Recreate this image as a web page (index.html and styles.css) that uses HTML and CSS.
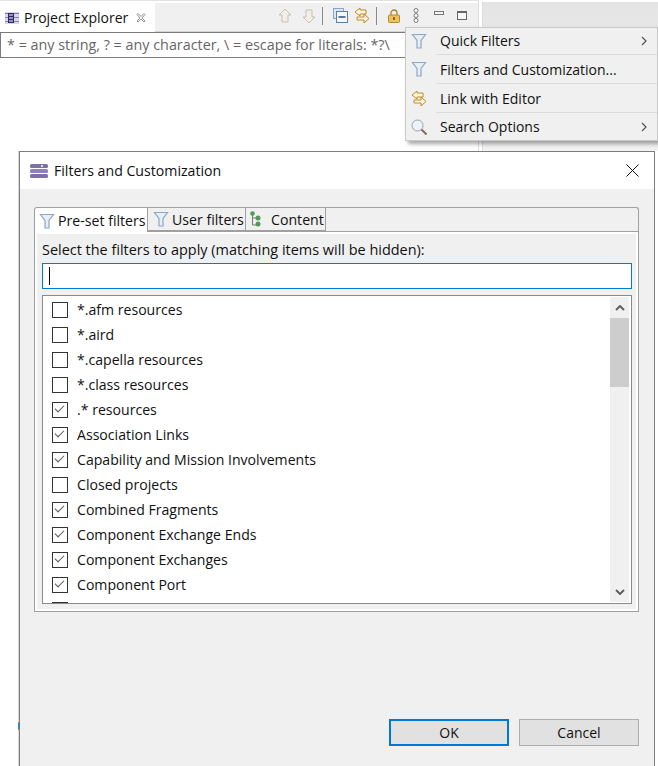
FILE: index.html
```html
<!DOCTYPE html>
<html lang="en">
<head>
    <meta charset="UTF-8">
    <meta name="viewport" content="width=device-width, initial-scale=1.0">
    <title>Filters and Customization</title>
    <link rel="stylesheet" href="styles.css">
</head>
<body>
    <svg class="defs" width="0" height="0">
        <symbol id="funnel" viewBox="0 0 16 16">
            <path d="M1.500 1.500h13l-4.500 6v7.500h-4V7.500z" fill="#e6eef6" stroke="#8fa6c4" stroke-width="1.200"/>
        </symbol>
        <symbol id="link" viewBox="0 0 16 17">
            <path d="M6 1 1 5l5 4V7h6V3H6z" fill="#fff6dc" stroke="#c08a2a"/>
            <path d="M10 7l5 4.500-5 4.500v-3H3v-3h7z" fill="#fff6dc" stroke="#c08a2a"/>
        </symbol>
    </svg>

    <div class="view">
        <div class="view-tabs">
            <div class="view-tab">
                <svg class="ico" width="14" height="14" viewBox="0 0 14 14">
                    <rect x="0" y="1" width="14" height="12" fill="#d8d4ea"/>
                    <path d="M0 2.500h14M0 6.500h14M0 10.500h14" stroke="#8a80b8"/>
                    <rect x="3" y="2" width="6" height="10" fill="#2c2a66"/>
                    <path d="M4 4h4M4 7h4M4 10h4" stroke="#fff"/>
                </svg>
                <span class="view-title">Project Explorer</span>
                <svg class="tab-close" width="10" height="10" viewBox="0 0 10 10">
                    <path d="M1 1.500 2 .500l3 3 3-3 1 1-3 3.500 3 3-1 1-3-3-3 3-1-1 3-3z" fill="#fff" stroke="#777" stroke-width=".8"/>
                </svg>
            </div>
            <div class="view-tools">
                <svg class="tool-up" width="14" height="16" viewBox="0 0 14 16"><path d="M7 1 1 7h3v7h6V7h3z" fill="#f2f0e6" stroke="#c3c1b4"/></svg>
                <svg class="tool-down" width="14" height="16" viewBox="0 0 14 16"><path d="M7 15 1 9h3V2h6v7h3z" fill="#f2f0e6" stroke="#c3c1b4"/></svg>
                <span class="tool-sep sep-first"></span>
                <svg class="tool-collapse" width="15" height="15" viewBox="0 0 15 15">
                    <rect x=".5" y=".5" width="10" height="10" fill="#d9e6f3" stroke="#8aa5c4"/>
                    <rect x="3.500" y="3.500" width="11" height="11" fill="#f4f8fc" stroke="#5b7fa8"/>
                    <path d="M5.500 9h7" stroke="#1f4f86" stroke-width="1.500"/>
                </svg>
                <svg class="tool-link" width="16" height="17"><use href="#link"/></svg>
                <span class="tool-sep sep-second"></span>
                <svg class="tool-lock" width="12" height="14" viewBox="0 0 12 14">
                    <path d="M3 6V4a3 3 0 0 1 6 0v2" fill="none" stroke="#a9842f" stroke-width="1.300"/>
                    <rect x=".5" y="6" width="11" height="7.500" rx="1" fill="#eec25a" stroke="#b08a32"/>
                    <rect x="5" y="8" width="2" height="3" fill="#8a6a20"/>
                </svg>
                <svg class="tool-dots" width="6" height="15" viewBox="0 0 6 15">
                    <circle cx="3" cy="2.500" r="2" fill="#fff" stroke="#777"/>
                    <circle cx="3" cy="7.500" r="2" fill="#fff" stroke="#777"/>
                    <circle cx="3" cy="12.500" r="2" fill="#fff" stroke="#777"/>
                </svg>
                <span class="tool-min"></span>
                <span class="tool-max"></span>
            </div>
        </div>
        <div class="view-filter">* = any string, ? = any character, \ = escape for literals: *?\</div>
    </div>

    <div class="side-panel"></div>

    <div class="menu">
        <div class="menu-item">
            <svg class="menu-ico" width="16" height="16"><use href="#funnel"/></svg>
            <span class="menu-label">Quick Filters</span>
            <svg class="menu-arrow" width="6" height="10" viewBox="0 0 6 10"><path d="M1 1l4 4-4 4" fill="none" stroke="#555" stroke-width="1.200"/></svg>
        </div>
        <div class="menu-item">
            <svg class="menu-ico" width="16" height="16"><use href="#funnel"/></svg>
            <span class="menu-label">Filters and Customization...</span>
        </div>
        <div class="menu-item">
            <svg class="menu-ico" width="16" height="17"><use href="#link"/></svg>
            <span class="menu-label">Link with Editor</span>
        </div>
        <div class="menu-item">
            <svg class="menu-ico" width="16" height="16" viewBox="0 0 16 16">
                <circle cx="6.500" cy="6.500" r="5.500" fill="#eef1f6" stroke="#9aa0aa"/>
                <path d="M10.500 10.500 15.500 15.500" stroke="#8a6a55" stroke-width="2"/>
            </svg>
            <span class="menu-label">Search Options</span>
            <svg class="menu-arrow" width="6" height="10" viewBox="0 0 6 10"><path d="M1 1l4 4-4 4" fill="none" stroke="#555" stroke-width="1.200"/></svg>
        </div>
    </div>

    <div class="dialog">
        <span class="edge-mark"></span>
        <div class="dialog-title">
            <svg width="18" height="14" viewBox="0 0 18 14">
                <rect x="0" y="0" width="18" height="4" rx="1.500" fill="#7d6fa8"/>
                <rect x="0" y="5" width="18" height="4" rx="1.500" fill="#8f82b6"/>
                <rect x="0" y="10" width="18" height="4" rx="1.500" fill="#7d6fa8"/>
                <circle cx="12" cy="2" r="1" fill="#fff"/>
            </svg>
            <span class="dialog-name">Filters and Customization</span>
            <svg class="dialog-close" width="13" height="13" viewBox="0 0 13 13"><path d="M.5.500l12 12M12.500.500l-12 12" stroke="#111" fill="none"/></svg>
        </div>
        <div class="dialog-body">
            <div class="tabs">
                <div class="tab-bar">
                    <div class="tab tab-active">
                        <svg width="16" height="16"><use href="#funnel"/></svg>
                        <span>Pre-set filters</span>
                    </div>
                    <div class="tab tab-user">
                        <svg width="16" height="16"><use href="#funnel"/></svg>
                        <span>User filters</span>
                    </div>
                    <div class="tab tab-content">
                        <svg width="12" height="16" viewBox="0 0 12 16">
                            <path d="M2.500 3v11h5M2.500 7h5" stroke="#777" fill="none"/>
                            <circle cx="2.500" cy="2.500" r="2.300" fill="#4f9a55"/>
                            <circle cx="8" cy="7" r="2.500" fill="#4f9a55"/>
                            <circle cx="8" cy="13" r="2.500" fill="#4f9a55"/>
                        </svg>
                        <span>Content</span>
                    </div>
                </div>
                <div class="tab-panel">
                    <div class="panel-label">Select the filters to apply (matching items will be hidden):</div>
                    <div class="search-box"><span class="caret"></span></div>
                    <div class="filter-list">
                        <ul class="rows">
                            <li class="row"><span class="check"></span>*.afm resources</li>
                            <li class="row"><span class="check"></span>*.aird</li>
                            <li class="row"><span class="check"></span>*.capella resources</li>
                            <li class="row"><span class="check"></span>*.class resources</li>
                            <li class="row"><span class="check on"></span>.* resources</li>
                            <li class="row"><span class="check on"></span>Association Links</li>
                            <li class="row"><span class="check on"></span>Capability and Mission Involvements</li>
                            <li class="row"><span class="check"></span>Closed projects</li>
                            <li class="row"><span class="check on"></span>Combined Fragments</li>
                            <li class="row"><span class="check on"></span>Component Exchange Ends</li>
                            <li class="row"><span class="check on"></span>Component Exchanges</li>
                            <li class="row"><span class="check on"></span>Component Port</li>
                            <li class="row"><span class="check"></span></li>
                        </ul>
                        <div class="scrollbar">
                            <div class="scroll-btn">
                                <svg width="10" height="6" viewBox="0 0 10 6"><path d="M1 5l4-4 4 4" fill="none" stroke="#606060" stroke-width="2"/></svg>
                            </div>
                            <div class="scroll-track"><div class="scroll-thumb"></div></div>
                            <div class="scroll-btn">
                                <svg width="10" height="6" viewBox="0 0 10 6"><path d="M1 1l4 4 4-4" fill="none" stroke="#606060" stroke-width="2"/></svg>
                            </div>
                        </div>
                    </div>
                </div>
            </div>
            <div class="dialog-buttons">
                <button class="btn btn-default">OK</button>
                <button class="btn">Cancel</button>
            </div>
        </div>
    </div>
</body>
</html>
```

FILE: styles.css
```css
html, body {
    margin: 0;
    height: 100%;
}
body {
    position: relative;
    width: 658px;
    height: 766px;
    overflow: hidden;
    background-color: #fff;
    font-family: "Open Sans", "Noto Sans", sans-serif;
    font-size: 14px;
    color: #111;
}
.defs {
    position: absolute;
}
.view {
    width: 479px;
    height: 151px;
    padding-top: 2px;
    border-top: 1px solid #e3e3e3;
    border-right: 1px solid #dcdcdc;
    box-sizing: border-box;
}
.view-tabs {
    display: flex;
    height: 29px;
    box-sizing: border-box;
    background-color: #f0f0f0;
    border-bottom: 1px solid #d4d4d4;
}
.view-tab {
    display: flex;
    align-items: center;
    width: 155px;
    height: 29px;
    padding-left: 5px;
    box-sizing: border-box;
    background-color: #fff;
}
.view-title {
    margin-left: 5px;
}
.tab-close {
    margin-left: 8px;
}
.view-tools {
    flex: 1;
    display: flex;
    align-items: center;
    padding: 0 0 3px 123px;
}
.tool-down {
    margin-left: 10px;
}
.tool-sep {
    width: 1px;
    height: 18px;
    background-color: #8c8c8c;
}
.sep-first {
    margin: 0 10px 0 6px;
}
.tool-link {
    margin-left: 6px;
}
.sep-second {
    margin: 0 11px 0 6px;
}
.tool-dots {
    margin-left: 13px;
}
.tool-min {
    width: 8px;
    height: 2px;
    margin: 0 0 6px 15px;
    border: 1px solid #777;
    background-color: #f4f4f4;
}
.tool-max {
    width: 8px;
    height: 6px;
    margin-left: 13px;
    border: 1px solid #666;
    border-top-width: 2px;
    background-color: #f8f8f8;
}
.view-filter {
    width: 405px;
    height: 26px;
    line-height: 23px;
    padding-left: 6px;
    box-sizing: border-box;
    border: 1px solid #7a7a7a;
    border-right: none;
    font-size: 14.35px;
    color: #666;
    white-space: nowrap;
    overflow: hidden;
}
.side-panel {
    position: absolute;
    left: 482px;
    top: 2px;
    right: 0;
    height: 149px;
    background: linear-gradient(#e4e4e4, #f2f2f2);
    border-left: 1px solid #dcdcdc;
}
.menu {
    position: absolute;
    left: 405px;
    top: 27px;
    width: 253px;
    height: 114px;
    box-sizing: border-box;
    background-color: #f0f0f0;
    border: 1px solid #c9c9c9;
    box-shadow: 3px 3px 4px rgba(0, 0, 0, 0.35);
}
.menu-item {
    position: relative;
    display: flex;
    align-items: center;
    box-sizing: border-box;
    height: 29px;
    padding: 1px 0 0 5px;
}
.menu-item:first-child {
    height: 26px;
    padding: 0 0 1px 5px;
}
.menu-item:last-child {
    height: 28px;
}
.menu-item + .menu-item::before {
    content: "";
    position: absolute;
    left: 30px;
    right: 0;
    top: 0;
    height: 1px;
    background-color: #dcdcdc;
}
.menu-label {
    margin-left: 13px;
}
.menu-arrow {
    margin-left: auto;
    margin-right: 10px;
}
.dialog {
    position: absolute;
    left: 19px;
    top: 151px;
    width: 636px;
    height: 640px;
    box-sizing: border-box;
    background-color: #f0f0f0;
    border: 1px solid #7d7d7d;
    box-shadow: -1px 0 0 #d8d8d8;
}
.edge-mark {
    position: absolute;
    left: -2px;
    top: 570px;
    width: 2px;
    height: 6px;
    background-color: #2f86d0;
    border-top: 1px solid #c9822a;
    border-bottom: 1px solid #c9822a;
}
.dialog-title {
    display: flex;
    align-items: center;
    gap: 6px;
    height: 37px;
    padding: 0 15px 0 10px;
    background-color: #fff;
}
.dialog-name {
    font-size: 14.15px;
}
.dialog-close {
    margin-left: auto;
}
.dialog-body {
    padding: 18px 15px 0 14px;
}
.tabs {
    height: 405px;
}
.tab-bar {
    display: flex;
    height: 24px;
    box-sizing: border-box;
    border: 1px solid #a0a0a0;
    border-bottom: none;
    border-radius: 3px 3px 0 0;
    background-color: #f0f0f0;
}
.tab {
    display: flex;
    align-items: center;
    gap: 3px;
    box-sizing: border-box;
    border-right: 1px solid #a0a0a0;
    font-size: 14.15px;
}
.tab-active {
    width: 113px;
    padding-left: 4px;
    height: 25px;
    background-color: #fff;
    border-radius: 3px 0 0 0;
}
.tab-user {
    width: 98px;
    border-bottom: 1px solid #a0a0a0;
    padding-left: 5px;
}
.tab-content {
    width: 80px;
    padding-left: 4px;
    border-bottom: 1px solid #a0a0a0;
    gap: 9px;
}
.tab-panel {
    height: 381px;
    box-sizing: border-box;
    padding: 2px 6px 7px 7px;
    border: 1px solid #a0a0a0;
    background-color: #f0f0f0;
    outline: 2px solid #fff;
    outline-offset: -3px;
}
.panel-label {
    height: 23px;
    line-height: 20px;
    margin-top: 6px;
    font-size: 14.45px;
    white-space: nowrap;
}
.search-box {
    display: flex;
    align-items: center;
    height: 26px;
    box-sizing: border-box;
    padding-left: 6px;
    border: 1px solid #0078d7;
    background-color: #fff;
}
.caret {
    width: 1px;
    height: 18px;
    background-color: #000;
}
.filter-list {
    display: flex;
    height: 309px;
    margin-top: 6px;
    box-sizing: border-box;
    border: 1px solid #8a8a8a;
    background-color: #fff;
    overflow: hidden;
}
.rows {
    flex: 1;
    margin: 0;
    padding: 1px 0 0;
    list-style: none;
    overflow: hidden;
    font-size: 14.1px;
}
.row {
    display: flex;
    align-items: center;
    height: 25px;
    padding-left: 9px;
    gap: 9px;
}
.check {
    position: relative;
    width: 14px;
    height: 14px;
    flex-shrink: 0;
    border: 1px solid #333;
    background-color: #fff;
}
.check.on::after {
    content: "";
    position: absolute;
    left: 2px;
    top: 2px;
    width: 8px;
    height: 4px;
    border-left: 1.500px solid #555;
    border-bottom: 1.500px solid #555;
    transform: rotate(-45deg);
}
.scrollbar {
    display: flex;
    flex-direction: column;
    width: 19px;
    margin: 1px 2px 1px 0;
    background-color: #f0f0f0;
}
.scroll-btn {
    display: flex;
    align-items: center;
    justify-content: center;
    height: 21px;
}
.scroll-track {
    flex: 1;
}
.scroll-thumb {
    height: 69px;
    background-color: #cdcdcd;
}
.dialog-buttons {
    display: flex;
    justify-content: flex-end;
    gap: 10px;
    margin-top: 107px;
}
.btn {
    width: 120px;
    height: 27px;
    padding: 0;
    box-sizing: border-box;
    font: inherit;
    color: #111;
    background-color: #e1e1e1;
    border: 1px solid #adadad;
}
.btn-default {
    border: 2px solid #0078d7;
}
```
